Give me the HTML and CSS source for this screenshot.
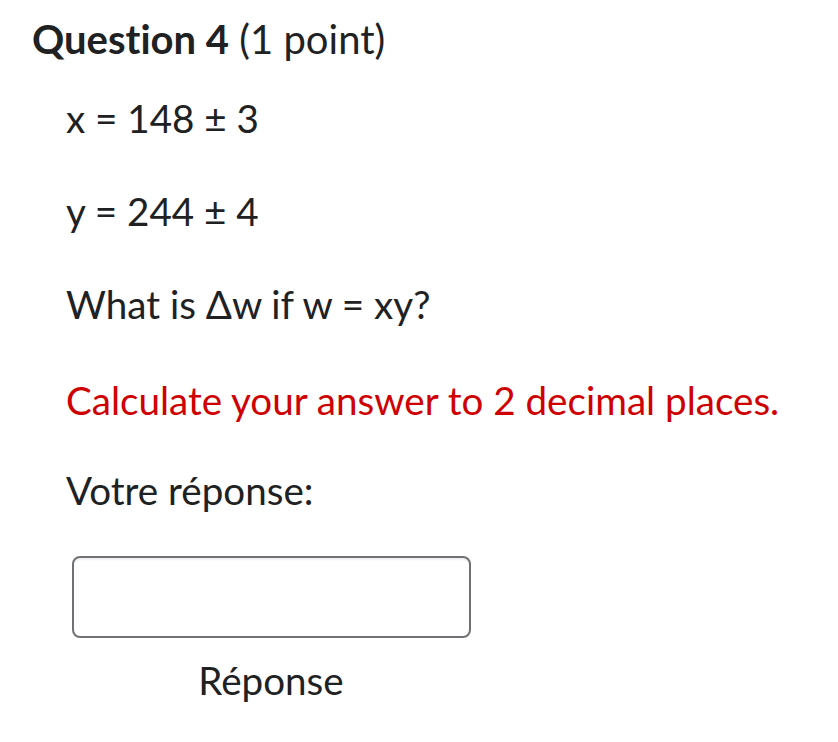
FILE: index.html
```html
<!DOCTYPE html>
<html>
<head>
<meta charset="utf-8">
<link rel="stylesheet" href="styles.css">
</head>
<body>
<div class="question">
  <h2 class="title"><span class="title-strong">Question 4</span> <span class="title-points">(1 point)</span></h2>
  <div class="body">
    <p class="line">x = 148 ± 3</p>
    <p class="line">y = 244 ± 4</p>
    <p class="line">What is Δw if w = xy?</p>
    <p class="line warn">Calculate your answer to 2 decimal places.</p>
    <p class="line last">Votre réponse:</p>
    <div class="answer">
      <input class="answer-input" type="text" aria-label="Réponse">
      <div class="answer-label">Réponse</div>
    </div>
  </div>
</div>
</body>
</html>
```
FILE: styles.css
```css
html, body {
  margin: 0;
  padding: 0;
  background: #ffffff;
}
body {
  font-family: Lato, "Noto Sans", sans-serif;
  color: #202122;
  font-variant-ligatures: none;
}
.question {
  padding: 14px 0 0 32px;
}
.title {
  margin: 0;
  font-size: 40px;
  line-height: 50px;
  font-weight: 400;
}
.title-strong {
  font-weight: 700;
}
.body {
  padding-left: 34px;
  padding-top: 31px;
}
.line {
  margin: 0 0 47px 0;
  font-size: 38.6px;
  line-height: 46px;
}
.line.warn {
  color: #cf0000;
  margin-top: 50px;
  margin-bottom: 44px;
}
.line.last {
  margin-bottom: 43px;
}
.answer {
  width: 400px;
  margin-left: 5px;
  display: flex;
  flex-direction: column;
  align-items: center;
}
.answer-input {
  box-sizing: border-box;
  width: 399px;
  height: 82px;
  border: 2px solid #6f7174;
  border-radius: 8px;
  background: #fff;
  box-shadow: inset 0 2px 2px rgba(0, 0, 0, 0.06);
  margin: 0;
}
.answer-label {
  font-size: 38.6px;
  line-height: 46px;
  margin-top: 19px;
}
```
